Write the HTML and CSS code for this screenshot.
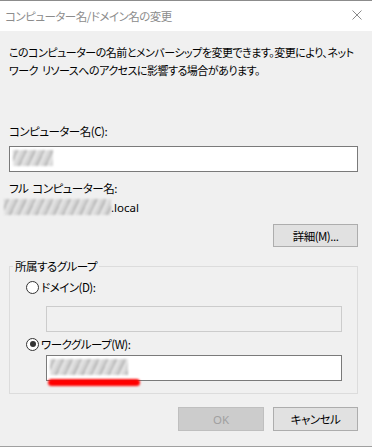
FILE: index.html
```html
<!DOCTYPE html>
<html lang="ja">
<head>
  <meta charset="UTF-8" />
  <title>コンピューター名/ドメイン名の変更</title>
  <link rel="stylesheet" href="styles.css">
</head>
<body>
  <div class="dialog">
    <div class="titlebar">
      <span class="title">コンピューター名/ドメイン名の変更</span>
      <svg class="close" width="10" height="10" viewBox="0 0 10 10">
        <path d="M0.5 0.5 L9.5 9.5 M9.5 0.5 L0.5 9.5" stroke="#8a8a8a" stroke-width="1" fill="none"/>
      </svg>
    </div>

    <div class="content">
      <p class="intro">このコンピューターの名前とメンバーシップを変更できます。変更により、ネット<br>ワーク<span class="gap"> </span>リソースへのアクセスに影響する場合があります。</p>

      <div class="label name-label">コンピューター名(C):</div>
      <div class="textbox"><span class="blur blur-name"></span></div>

      <div class="label full-label">フル<span class="gap"> </span>コンピューター名:</div>
      <div class="fullname"><span class="blur blur-full"></span><span class="suffix">.local</span></div>

      <div class="more-row">
        <button class="btn">詳細(M)...</button>
      </div>

      <fieldset class="group">
        <legend>所属するグループ</legend>
        <div class="radio-row first">
          <span class="radio"></span>
          <span>ドメイン(D):</span>
        </div>
        <div class="textbox sub disabled"></div>
        <div class="radio-row">
          <span class="radio checked"></span>
          <span>ワークグループ(W):</span>
        </div>
        <div class="textbox sub workgroup"><span class="blur blur-group"></span><span class="redmark"></span></div>
      </fieldset>

      <div class="actions">
        <button class="btn ok" disabled>OK</button>
        <button class="btn">キャンセル</button>
      </div>
    </div>
  </div>
</body>
</html>
```

FILE: styles.css
```css
html, body {
  margin: 0;
  padding: 0;
}
body {
  font-family: "Noto Sans CJK JP", "Noto Sans", sans-serif;
  font-size: 11.5px;
  font-feature-settings: "palt";
  letter-spacing: -0.5px;
  color: #000;
  background: #f0f0f0;
}
.dialog {
  width: 372px;
  height: 447px;
  box-sizing: border-box;
  border-top: 1px solid #8c8c8c;
  border-bottom: 1px solid #a0a0a0;
  display: flex;
  flex-direction: column;
  overflow: hidden;
}
.titlebar {
  flex-shrink: 0;
  height: 30px;
  background: #fff;
  display: flex;
  align-items: center;
  justify-content: space-between;
  padding: 0 10px 0 5px;
}
.title {
  color: #8c8c8c;
  margin-top: -1px;
}
.close {
  margin-top: -2px;
}
.content {
  flex: 1;
  padding: 0 14px 0 9px;
}
.intro {
  margin: 12px 0 0;
  line-height: 18px;
  white-space: nowrap;
  font-size: 11px;
}
.gap {
  display: inline-block;
  width: 4px;
}
.label {
  line-height: 18px;
}
.name-label {
  margin-top: 43px;
}
.textbox {
  position: relative;
  height: 26px;
  box-sizing: border-box;
  border: 1px solid #7a7a7a;
  background: #fff;
}
.name-label + .textbox {
  margin-top: 6px;
}
.full-label {
  margin-top: 7px;
}
.fullname {
  display: flex;
  align-items: center;
  height: 18px;
  margin-left: -5px;
  margin-top: 1px;
}
.suffix {
  font-family: "Noto Sans", sans-serif;
  letter-spacing: 0;
}
.blur {
  display: inline-block;
  height: 16px;
  background: repeating-linear-gradient(115deg, #d6d6d6 0 3px, #b8b8b8 3px 5px, #e4e4e4 5px 8px);
  filter: blur(1px);
}
.blur-name {
  position: absolute;
  left: 3px;
  top: 3px;
  width: 40px;
}
.blur-full {
  width: 107px;
}
.blur-group {
  position: absolute;
  left: 3px;
  top: 3px;
  width: 78px;
}
.redmark {
  position: absolute;
  left: 1px;
  top: 23px;
  width: 92px;
  height: 7px;
  border-radius: 4px;
  background: #f00;
  filter: blur(1px);
}
.more-row {
  display: flex;
  justify-content: flex-end;
  margin-top: 8px;
}
.btn {
  font: inherit;
  letter-spacing: inherit;
  width: 85px;
  height: 23px;
  box-sizing: border-box;
  border: 1px solid #adadad;
  background: #e1e1e1;
  color: #000;
  padding: 0;
}
.btn.ok {
  width: 86px;
  background: #cccccc;
  border-color: #bfbfbf;
  color: #a0a0a0;
  font-family: "Noto Sans", sans-serif;
  letter-spacing: 0;
}
.actions .btn {
  height: 24px;
}
.group {
  margin: 10px 0 0;
  border: 1px solid #dcdcdc;
  padding: 0 15px 12px 3px;
}
.group legend {
  padding: 0 2px;
  line-height: 18px;
}
.radio-row {
  display: flex;
  align-items: center;
  gap: 2px;
  margin-left: 13px;
  height: 18px;
}
.radio-row.first {
  margin-top: 3px;
}
.radio {
  width: 13px;
  height: 13px;
  box-sizing: border-box;
  border: 1px solid #333;
  border-radius: 50%;
  background: #fff;
  position: relative;
}
.radio.checked::after {
  content: "";
  position: absolute;
  left: 2.5px;
  top: 2.5px;
  width: 6px;
  height: 6px;
  border-radius: 50%;
  background: #333;
}
.textbox.sub {
  margin-left: 33px;
  margin-top: 10px;
}
.textbox.disabled {
  background: #f0f0f0;
  border-color: #cccccc;
  margin-bottom: 3px;
}
.textbox.workgroup {
  margin-top: 2px;
}
.actions {
  display: flex;
  justify-content: flex-end;
  gap: 9px;
  margin-top: 13px;
}
```
